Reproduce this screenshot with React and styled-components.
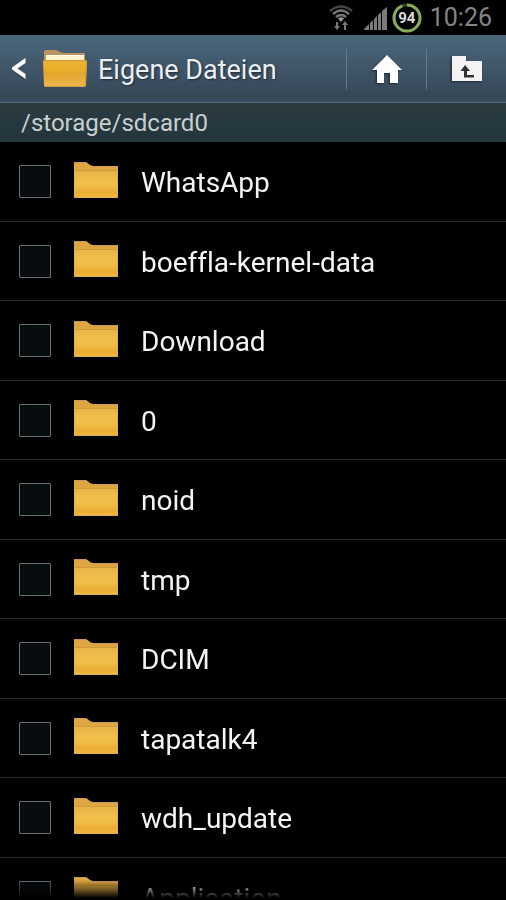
import React from "react";
import styled, { createGlobalStyle } from "styled-components";

const GlobalStyle = createGlobalStyle`
  *, *::before, *::after { box-sizing: border-box; }
  body {
    margin: 0;
    background: #000;
    font-family: Roboto, "Noto Sans", sans-serif;
    font-variant-ligatures: none;
  }
`;

const Screen = styled.div`
  display: flex;
  flex-direction: column;
  height: 100vh;
  overflow: hidden;
  background: #000;
  color: #f4f4f4;
`;

const StatusBar = styled.div`
  display: flex;
  flex: none;
  align-items: center;
  justify-content: flex-end;
  height: 35px;
  padding-right: 14px;
  color: #858585;
`;

const StatusIcon = styled.svg`
  display: block;
  flex: none;
  margin-right: ${(p) => p.$gap}px;
`;

const Battery = styled.div`
  display: grid;
  place-items: center;
  width: 30px;
  height: 30px;
  margin-right: 8px;
  color: #dcdcdc;
  font-size: 15px;
  font-weight: 700;
  line-height: 30px;

  > * { grid-area: 1 / 1; }
`;

const Clock = styled.time`
  font-size: 25px;
  line-height: 34px;
`;

const Header = styled.header`
  display: flex;
  flex: none;
  align-items: center;
  height: 68px;
  border-bottom: 1px solid #536876;
  background: linear-gradient(#4b677b 0%, #435b6e 35%, #3a4d5e 75%, #344656 92%, #3b5062 100%);
`;

const BackButton = styled.button`
  display: flex;
  align-items: center;
  gap: 11px;
  min-width: 0;
  margin: 0;
  padding: 0 0 0 12px;
  border: 0;
  background: none;
  color: #e9f0f5;
  font: inherit;
  cursor: pointer;

  svg { flex: none; }
`;

const Title = styled.h1`
  margin: 0;
  padding-top: 2px;
  overflow: hidden;
  font-size: 27px;
  font-weight: 400;
  line-height: 32px;
  text-overflow: ellipsis;
  text-shadow: 1px 1px 2px #1b2833;
  white-space: nowrap;
`;

const Actions = styled.div`
  display: flex;
  flex: none;
  margin-left: auto;
`;

const ActionButton = styled.button`
  display: grid;
  place-items: center;
  width: 80px;
  height: 40px;
  padding: 0;
  border: 0;
  border-left: 1px solid #64798a;
  background: none;
  cursor: pointer;

  svg { filter: drop-shadow(-1px 1px 1px #1c2731); }
`;

const PathBar = styled.div`
  flex: none;
  height: 39px;
  padding: 0 21px;
  background: linear-gradient(#2b3c41, #22363c 85%, #2a383d);
  color: #c9cfd1;
  font-size: 24px;
  line-height: 40px;
`;

const FileList = styled.ul`
  flex: 1;
  min-height: 0;
  margin: 0;
  padding: 0;
  overflow: hidden;
  list-style: none;
  mask-image: linear-gradient(to top, transparent 2px, #000 20px);
`;

const Row = styled.li`
  height: 79px;
  border-bottom: 1px solid #2b2b2b;

  &:nth-child(odd) { height: 80px; }
`;

const RowLabel = styled.label`
  display: flex;
  align-items: center;
  height: 100%;
  padding: 0 19px;
  cursor: pointer;

  svg {
    flex: none;
    margin: 0 22px;
  }
`;

const Check = styled.input`
  appearance: none;
  flex: none;
  width: 32px;
  height: 33px;
  margin: 0;
  border: 1px solid #687072;
  border-radius: 1px;
  background: #070d0f;

  &:checked { background: #4b677b; }
`;

const FileName = styled.span`
  padding-top: 3px;
  font-size: 28px;
  line-height: 36px;
  white-space: nowrap;
`;

const Defs = styled.svg`
  display: block;
  width: 0;
  height: 0;
`;

function Gradients() {
  return (
    <Defs aria-hidden="true" height="0">
      <defs>
        <linearGradient id="folderFront" x1="0" y1="0" x2="0" y2="1">
          <stop offset="0" stopColor="#e9b347" />
          <stop offset="0.4" stopColor="#f0c04c" />
          <stop offset="0.58" stopColor="#f0bd45" />
          <stop offset="0.8" stopColor="#ebac32" />
          <stop offset="1" stopColor="#efb940" />
        </linearGradient>
        <linearGradient id="openFront" x1="0" y1="0" x2="0" y2="1">
          <stop offset="0" stopColor="#e9b035" />
          <stop offset="0.35" stopColor="#eeb02a" />
          <stop offset="0.5" stopColor="#e4a52d" />
          <stop offset="1" stopColor="#edb64d" />
        </linearGradient>
      </defs>
    </Defs>
  );
}

function FolderIcon() {
  return (
    <svg width="46" height="42" viewBox="0 0 46 42" aria-hidden="true">
      <path d="M1 1H12C15 1 16 5 20 5H45V37H1Z" fill="#dda641" />
      <path d="M1 9H45V37H1Z" fill="url(#folderFront)" />
      <path d="M1 1.5H12C15 1.5 16 5.5 20 5.5H45" fill="none" stroke="#c79c59" />
      <path d="M1.5 9V36.5H44.5V6" fill="none" stroke="#d5b05a" />
      <path d="M2 9.5H44" stroke="#d09a38" />
    </svg>
  );
}

function OpenFolderIcon() {
  return (
    <svg width="44" height="40" viewBox="1 0 44 40" aria-hidden="true">
      <path d="M2 12V3Q2 1 4 1H13C17 1 18 4 22 4H42Q43 4 43 5V12Z" fill="#b89460" />
      <path d="M4 6H42V13H4Z" fill="#fff3c9" />
      <path d="M4 6.5H42" stroke="#fffdf0" />
      <path d="M1 13Q1 11 3 11H43Q45 11 45 13L44 36Q44 38 42 38H4Q2 38 2 36Z" fill="url(#openFront)" />
      <path d="M2 13Q2 11.500 4 11.500H43M3 37.500H43L44.500 13" fill="none" stroke="#cf9c49" />
    </svg>
  );
}

const files = [
  "WhatsApp",
  "boeffla-kernel-data",
  "Download",
  "0",
  "noid",
  "tmp",
  "DCIM",
  "tapatalk4",
  "wdh_update",
  "Application",
];

export default function App() {
  return (
    <Screen>
      <GlobalStyle />
      <Gradients />
      <StatusBar>
        <StatusIcon $gap={10} width="24" height="26" viewBox="0 0 24 26" role="img" aria-label="WLAN">
          <g fill="none" stroke="#777">
            <path d="M1 6Q12 -3 23 6" stroke="#444" strokeWidth="2.500" />
            <path d="M4 9Q12 2 20 9" strokeWidth="2.500" />
            <path d="M7 12Q12 8 17 12" strokeWidth="2.500" />
          </g>
          <path d="M9 13.500Q12 11 15 13.500L12 17Z" fill="#999" />
          <path d="M7 17H9V21H11L8 25L5 21H7ZM15 25H17V20H19L16 16L13 20H15Z" fill="#777" />
        </StatusIcon>
        <StatusIcon $gap={5} width="24" height="24" viewBox="0 0 24 24" role="img" aria-label="Signal">
          <path d="M1 24V23L6 18V24ZM7 24V17L10 14V24ZM11 24V13L14 10V24ZM15 24V9L18 6V24ZM19 24V5L24 1V24Z" fill="#7b7b7b" />
        </StatusIcon>
        <Battery>
          <svg width="30" height="30" viewBox="0 0 30 30" aria-hidden="true">
            <circle cx="15" cy="15" r="13" fill="none" stroke="#354226" strokeWidth="3" />
            <circle
              cx="15"
              cy="15"
              r="13"
              fill="none"
              stroke="#86aa5c"
              strokeWidth="3"
              pathLength="100"
              strokeDasharray="94 6"
              transform="rotate(-90 15 15)"
            />
          </svg>
          <span>94</span>
        </Battery>
        <Clock>10:26</Clock>
      </StatusBar>
      <Header>
        <BackButton type="button">
          <svg width="20" height="24" viewBox="1 0 20 24" aria-hidden="true">
            <path d="M13 3V7L6 12L13 18V23L1 13.500V11.500Z" fill="#1f2e39" opacity="0.5" />
            <path d="M14.500 1V6L6.500 11.500L14.500 17V22L1 12.500V10.500Z" fill="#fff" />
          </svg>
          <OpenFolderIcon />
          <Title>Eigene Dateien</Title>
        </BackButton>
        <Actions>
          <ActionButton type="button" aria-label="Startseite">
            <svg width="30" height="30" viewBox="0 0 30 30" aria-hidden="true">
              <path d="M15 1L30 16H26V29H18V19H12V29H5V16H0Z" fill="#fff" />
            </svg>
          </ActionButton>
          <ActionButton type="button" aria-label="Eine Ebene nach oben">
            <svg width="32" height="28" viewBox="0 0 32 28" aria-hidden="true">
              <path d="M1 1H15V6H31V26H1Z" fill="#f4f4f4" />
              <path d="M14 10L19 16H16V20H23V22.500H13V16H9.500Z" fill="#2b3338" />
            </svg>
          </ActionButton>
        </Actions>
      </Header>
      <PathBar>/storage/sdcard0</PathBar>
      <FileList>
        {files.map((name) => (
          <Row key={name}>
            <RowLabel>
              <Check type="checkbox" />
              <FolderIcon />
              <FileName>{name}</FileName>
            </RowLabel>
          </Row>
        ))}
      </FileList>
    </Screen>
  );
}
